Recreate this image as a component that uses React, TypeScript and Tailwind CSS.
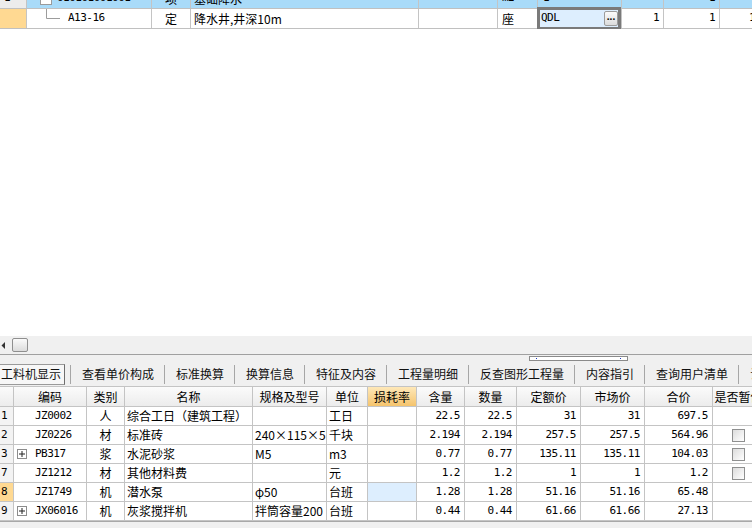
import React from 'react';

const cjk = "font-['Noto_Sans_CJK_SC',sans-serif] text-[12px]";
const mono = "font-['DejaVu_Sans_Mono','Noto_Sans_CJK_SC',monospace] text-[11px] tracking-[-0.5px]";
const cell = 'shrink-0 h-full flex items-center overflow-hidden whitespace-nowrap border-r border-[#c4c4c4]';

// Tree connector between parent item and child row
const TreeLine: React.FC = () => (
  <svg width="16" height="19" className="shrink-0">
    <path d="M1.5 0 V9.5 H15" stroke="#9c9c9c" strokeWidth="1" fill="none" />
  </svg>
);

const TopGrid: React.FC = () => (
  <div className="h-[29px] shrink-0 overflow-hidden flex flex-col justify-end">
    {/* parent row, scrolled mostly out of view */}
    <div className="flex h-[20px] shrink-0 border-b border-[#c0c0c0] bg-[#a9dbf9]">
      <div className={`${cell} w-[27px] bg-[#ececec] pl-[4px] ${mono}`}>1</div>
      <div className={`${cell} w-[125px] pl-[13px]`}>
        <span className="w-[12px] h-[12px] shrink-0 border border-[#9a9a9a] bg-white" />
        <span className={`ml-[5px] ${mono}`}>010101001001</span>
      </div>
      <div className={`${cell} w-[39px] justify-center ${cjk}`}>项</div>
      <div className={`${cell} w-[228px] pl-[3px] ${cjk}`}>基础降水</div>
      <div className={`${cell} w-[79px]`} />
      <div className={`${cell} w-[40px] pl-[4px] ${mono}`}>m2</div>
      <div className={`${cell} w-[84px] pl-[5px] ${mono}`}>1</div>
      <div className={`${cell} w-[42px]`} />
      <div className={`${cell} w-[56px] justify-end pr-[4px] ${mono}`}>1</div>
      <div className={`${cell} w-[40px]`} />
    </div>
    {/* child quota row with in-place editor */}
    <div className="flex h-[20px] shrink-0 border-b border-[#c0c0c0] bg-white">
      <div className={`${cell} w-[27px] bg-[#ffd992]`} />
      <div className={`${cell} w-[125px] pl-[18px]`}>
        <TreeLine />
        <span className={`ml-[7px] ${mono}`}>A13-16</span>
      </div>
      <div className={`${cell} w-[39px] justify-center ${cjk}`}>定</div>
      <div className={`${cell} w-[228px] pl-[3px] ${cjk}`}>降水井,井深10m</div>
      <div className={`${cell} w-[79px]`} />
      <div className={`${cell} w-[40px] pl-[4px] ${cjk}`}>座</div>
      <div className={`${cell} w-[84px] relative !overflow-visible`}>
        <div className="absolute -left-px -top-[2px] -bottom-[2px] right-0 border-[3px] border-[#7a7a7a] bg-[#ddeefe] flex items-center">
          <span className={`pl-[1px] ${mono}`}>QDL</span>
          <span className="ml-auto w-[14px] h-[15px] border border-[#9c9c9c] rounded-[2px] bg-linear-to-b from-[#fbfbfb] to-[#dcdcdc] flex items-center justify-center text-[10px] font-bold leading-none text-black">
            ···
          </span>
        </div>
      </div>
      <div className={`${cell} w-[42px] justify-end pr-[4px] ${mono}`}>1</div>
      <div className={`${cell} w-[56px] justify-end pr-[4px] ${mono}`}>1</div>
      <div className={`${cell} w-[36px] justify-end pr-[0px] ${mono}`}>1</div>
    </div>
  </div>
);

const tabs = ['查看单价构成', '标准换算', '换算信息', '特征及内容', '工程量明细', '反查图形工程量', '内容指引', '查询用户清单', '说明信息'];

const TabBar: React.FC = () => (
  <div className="shrink-0 bg-[#f0f0f0]">
    {/* splitter grip */}
    <div className="h-[7px] flex items-start pl-[529px] pt-[1px]">
      <div className="w-[99px] h-[5px] border border-[#8a8a8a] bg-white flex items-center justify-between px-[6px]">
        <span className="w-px h-px bg-[#1e3cc8]" />
        <span className="w-px h-px bg-[#1e3cc8]" />
      </div>
    </div>
    <div className={`h-[24px] flex items-center ${cjk} text-[#111]`}>
      <div className="w-[65px] h-[21px] shrink-0 flex items-center pl-[1px] border border-l-0 border-[#9a9a9a] border-r-[#6e6e6e] bg-[#f7f7f7]">
        工料机显示
      </div>
      <div className="w-[5px] shrink-0" />
      {tabs.map(t => (
        <React.Fragment key={t}>
          <span className="w-px h-[19px] shrink-0 bg-[#a6a6a6]" />
          <span className="shrink-0 pl-[11px] pr-[10px] whitespace-nowrap">{t}</span>
        </React.Fragment>
      ))}
    </div>
  </div>
);

type Row = {
  no: string;
  code: string;
  plus?: boolean;
  type: string;
  name: string;
  spec: string;
  unit: string;
  qty: string;
  num: string;
  quota: string;
  market: string;
  total: string;
  check: boolean;
  active?: boolean;
};

const rows: Row[] = [
  { no: '1', code: 'JZ0002', type: '人', name: '综合工日（建筑工程）', spec: '', unit: '工日', qty: '22.5', num: '22.5', quota: '31', market: '31', total: '697.5', check: false },
  { no: '2', code: 'JZ0226', type: '材', name: '标准砖', spec: '240×115×5', unit: '千块', qty: '2.194', num: '2.194', quota: '257.5', market: '257.5', total: '564.96', check: true },
  { no: '3', code: 'PB317', plus: true, type: '浆', name: '水泥砂浆', spec: 'M5', unit: 'm3', qty: '0.77', num: '0.77', quota: '135.11', market: '135.11', total: '104.03', check: true },
  { no: '7', code: 'JZ1212', type: '材', name: '其他材料费', spec: '', unit: '元', qty: '1.2', num: '1.2', quota: '1', market: '1', total: '1.2', check: true },
  { no: '8', code: 'JZ1749', type: '机', name: '潜水泵', spec: 'φ50', unit: '台班', qty: '1.28', num: '1.28', quota: '51.16', market: '51.16', total: '65.48', check: false, active: true },
  { no: '9', code: 'JX06016', plus: true, type: '机', name: '灰浆搅拌机', spec: '拌筒容量200', unit: '台班', qty: '0.44', num: '0.44', quota: '61.66', market: '61.66', total: '27.13', check: false },
];

const PlusBox: React.FC = () => (
  <span className="w-[10px] h-[10px] shrink-0 border border-[#8c8c8c] bg-white flex items-center justify-center">
    <svg width="8" height="8">
      <path d="M1 4 H7 M4 1 V7" stroke="#222" strokeWidth="1" />
    </svg>
  </span>
);

const CheckBox: React.FC = () => (
  <span className="w-[13px] h-[13px] border border-[#8e8f8f] bg-linear-to-br from-[#dcdcdc] to-[#ffffff]" />
);

const MaterialTable: React.FC = () => (
  <div className="shrink-0 w-[752px] overflow-hidden">
    <div className={`flex h-[21px] w-[765px] border-y border-[#c4c4c4] bg-linear-to-b from-[#fbfbfb] to-[#ececec] ${cjk}`}>
      <div className={`${cell} w-[14px]`} />
      <div className={`${cell} w-[73px] justify-center`}>编码</div>
      <div className={`${cell} w-[38px] justify-center`}>类别</div>
      <div className={`${cell} w-[128px] justify-center`}>名称</div>
      <div className={`${cell} w-[74px] justify-center`}>规格及型号</div>
      <div className={`${cell} w-[41px] justify-center`}>单位</div>
      <div className={`${cell} w-[49px] justify-center bg-linear-to-b from-[#fee8b8] to-[#f5c46c]`}>损耗率</div>
      <div className={`${cell} w-[48px] justify-center`}>含量</div>
      <div className={`${cell} w-[52px] justify-center`}>数量</div>
      <div className={`${cell} w-[64px] justify-center`}>定额价</div>
      <div className={`${cell} w-[64px] justify-center`}>市场价</div>
      <div className={`${cell} w-[68px] justify-center`}>合价</div>
      <div className={`${cell} w-[52px] justify-center`}>是否暂估</div>
    </div>
    {rows.map(r => (
      <div key={r.no} className="flex h-[19px] w-[765px] border-b border-[#c4c4c4] bg-white">
        <div className={`${cell} w-[14px] pl-[1px] ${mono} ${r.active ? 'bg-[#ffd992]' : 'bg-[#f3f3f3]'}`}>{r.no}</div>
        <div className={`${cell} w-[73px] ${r.plus ? 'pl-[3px]' : 'pl-[21px]'}`}>
          {r.plus && <PlusBox />}
          <span className={`${r.plus ? 'ml-[8px]' : ''} ${mono}`}>{r.code}</span>
        </div>
        <div className={`${cell} w-[38px] justify-center ${cjk}`}>{r.type}</div>
        <div className={`${cell} w-[128px] pl-[2px] ${cjk}`}>{r.name}</div>
        <div className={`${cell} w-[74px] pl-[2px] ${cjk}`}>{r.spec}</div>
        <div className={`${cell} w-[41px] pl-[2px] ${cjk}`}>{r.unit}</div>
        <div className={`${cell} w-[49px] ${r.active ? 'bg-[#ddeefe]' : ''}`} />
        <div className={`${cell} w-[48px] justify-end pr-[4px] ${mono}`}>{r.qty}</div>
        <div className={`${cell} w-[52px] justify-end pr-[4px] ${mono}`}>{r.num}</div>
        <div className={`${cell} w-[64px] justify-end pr-[4px] ${mono}`}>{r.quota}</div>
        <div className={`${cell} w-[64px] justify-end pr-[4px] ${mono}`}>{r.market}</div>
        <div className={`${cell} w-[68px] justify-end pr-[4px] ${mono}`}>{r.total}</div>
        <div className={`${cell} w-[52px] justify-center`}>{r.check && <CheckBox />}</div>
      </div>
    ))}
  </div>
);

const App: React.FC = () => {
  return (
    <div className="w-[752px] h-[528px] overflow-hidden flex flex-col bg-white text-black">
      <TopGrid />

      {/* empty grid area */}
      <div className="flex-1 bg-white" />

      {/* horizontal scrollbar */}
      <div className="h-[18px] shrink-0 bg-[#f0f0f0] flex items-center">
        <svg width="5" height="7" className="ml-[1px] shrink-0">
          <path d="M4 0 L0.5 3.5 L4 7 Z" fill="#333" />
        </svg>
        <div className="ml-[6px] w-[16px] h-[14px] rounded-[2px] border border-[#8f8f8f] bg-linear-to-b from-[#fafafa] to-[#dcdcdc]" />
      </div>
      <div className="h-px shrink-0 bg-[#a0a0a0]" />

      <TabBar />
      <MaterialTable />

      <div className="h-[7px] shrink-0 bg-[#f0f0f0] border-t border-[#a8a8a8]" />
    </div>
  );
};

export default App;
